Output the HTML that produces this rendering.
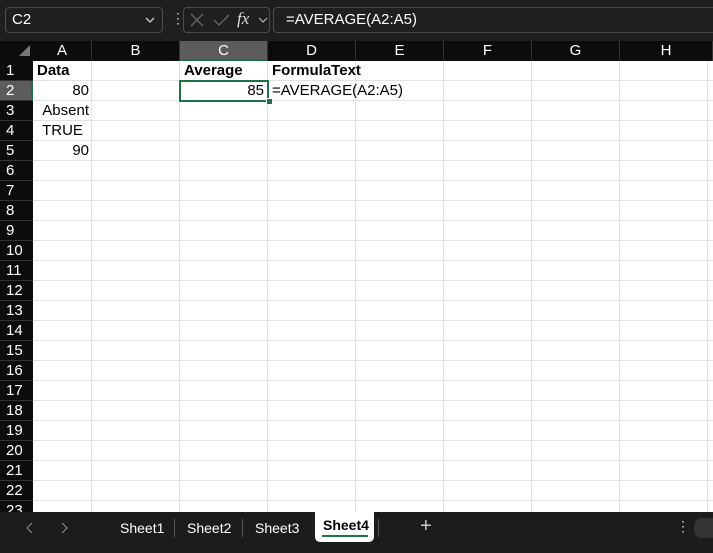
<!DOCTYPE html><html><head><style>
body{margin:0;width:713px;height:553px;overflow:hidden;background:#fff;font-family:"Liberation Sans",sans-serif;position:relative}
.a{position:absolute}
.fb{left:0;top:0;width:713px;height:41px;background:#1f1f1f}
.box{border:1px solid #4a4a4a;border-radius:4px;height:24px;top:7px}
.ch{top:41px;height:20px;background:#0c0c0c;color:#fff;font-size:15px;text-align:center;line-height:20px;border-right:1px solid #333;box-sizing:border-box}
.rh{left:0;width:33px;height:20px;background:#0c0c0c;color:#fff;font-size:15px;line-height:20px;text-align:left;padding-left:6px;box-sizing:border-box;border-bottom:1px solid #333}
.c{font-size:15px;color:#000;line-height:20px;height:20px}
</style></head><body>
<div class="a fb"></div>
<div class="a box" style="left:5px;width:156px"></div>
<div class="a" style="left:12px;top:11px;color:#fff;font-size:15px">C2</div>
<svg class="a" style="left:145px;top:16px" width="10" height="8"><path d="M1 2l4 4 4-4" stroke="#ccc" stroke-width="1.3" fill="none"/></svg>
<div class="a" style="left:171px;top:10px;color:#ccc;font-size:14px">⋮</div>
<div class="a box" style="left:183px;width:85px"></div>
<svg class="a" style="left:188px;top:12px" width="80" height="16"><path d="M3 2L15 14M15 2L3 14" stroke="#666" stroke-width="1.3"/><path d="M26 8L31 13L41 3" stroke="#666" stroke-width="1.3" fill="none"/><path d="M71 6l4 4 4-4" stroke="#bbb" stroke-width="1.2" fill="none"/></svg>
<div class="a" style="left:237px;top:9px;color:#ddd;font-size:17px;font-style:italic;font-family:'Liberation Serif',serif">fx</div>
<div class="a box" style="left:273px;width:450px"></div>
<div class="a" style="left:286px;top:11px;color:#fff;font-size:15px">=AVERAGE(A2:A5)</div>
<div class="a" style="left:0;top:41px;width:713px;height:20px;background:#0c0c0c"></div>
<svg class="a" style="left:19px;top:45px" width="12" height="12"><path d="M11 0V11H0Z" fill="#777"/></svg>
<div class="a ch" style="left:33px;width:59px">A</div>
<div class="a ch" style="left:92px;width:88px">B</div>
<div class="a ch" style="left:180px;width:88px;background:#5c5c5c;border-bottom:2px solid #1e7145">C</div>
<div class="a ch" style="left:268px;width:88px">D</div>
<div class="a ch" style="left:356px;width:88px">E</div>
<div class="a ch" style="left:444px;width:88px">F</div>
<div class="a ch" style="left:532px;width:88px">G</div>
<div class="a ch" style="left:620px;width:93px">H</div>
<div class="a" style="left:33px;top:61px;width:680px;height:451px;background-image:linear-gradient(#e1e1e1 1px,transparent 1px);background-size:100% 20px;background-position:0 19px"></div>
<div class="a" style="left:0;top:61px;width:713px;height:451px;background:linear-gradient(90deg,transparent 91px,#e1e1e1 91px,#e1e1e1 92px,transparent 92px,transparent 179px,#e1e1e1 179px,#e1e1e1 180px,transparent 180px,transparent 267px,#e1e1e1 267px,#e1e1e1 268px,transparent 268px,transparent 355px,#e1e1e1 355px,#e1e1e1 356px,transparent 356px,transparent 443px,#e1e1e1 443px,#e1e1e1 444px,transparent 444px,transparent 531px,#e1e1e1 531px,#e1e1e1 532px,transparent 532px,transparent 619px,#e1e1e1 619px,#e1e1e1 620px,transparent 620px,transparent 707px,#e1e1e1 707px,#e1e1e1 708px,transparent 708px)"></div>
<div id="rows"></div>
<script>
var h='';for(var i=1;i<=23;i++){h+='<div class="a rh" style="top:'+(41+i*20)+'px;'+(i==2?'background:#5c5c5c;border-right:2px solid #1e7145;':'')+'">'+i+'</div>';}
document.getElementById('rows').innerHTML=h;
</script>
<div class="a c" style="left:37px;top:61px;font-weight:bold">Data</div>
<div class="a c" style="left:33px;top:81px;width:56px;text-align:right">80</div>
<div class="a c" style="left:33px;top:101px;width:56px;text-align:right">Absent</div>
<div class="a c" style="left:33px;top:121px;width:59px;text-align:center">TRUE</div>
<div class="a c" style="left:33px;top:141px;width:56px;text-align:right">90</div>
<div class="a c" style="left:184px;top:61px;font-weight:bold">Average</div>
<div class="a c" style="left:272px;top:61px;font-weight:bold">FormulaText</div>
<div class="a c" style="left:180px;top:81px;width:84px;text-align:right">85</div>
<div class="a c" style="left:272px;top:81px">=AVERAGE(A2:A5)</div>
<div class="a" style="left:179px;top:80px;width:86px;height:18px;border:2px solid #1e7145"></div>
<div class="a" style="left:266px;top:98px;width:5px;height:5px;background:#1e7145;border:1px solid #fff"></div>
<div class="a" style="left:0;top:512px;width:713px;height:33px;background:#1c1c1c"></div>
<svg class="a" style="left:22px;top:521px" width="50" height="14"><path d="M10 2L5 7l5 5M40 2l5 5-5 5" stroke="#888" stroke-width="1.2" fill="none"/></svg>
<div class="a" style="left:120px;top:520px;color:#fff;font-size:14px">Sheet1</div>
<div class="a" style="left:174px;top:519px;width:1px;height:18px;background:#555"></div>
<div class="a" style="left:187px;top:520px;color:#fff;font-size:14px">Sheet2</div>
<div class="a" style="left:242px;top:519px;width:1px;height:18px;background:#555"></div>
<div class="a" style="left:255px;top:520px;color:#fff;font-size:14px">Sheet3</div>
<div class="a" style="left:315px;top:512px;width:59px;height:30px;background:#fff;border-radius:0 0 5px 5px"></div>
<div class="a" style="left:323px;top:517px;color:#000;font-size:14px;font-weight:bold">Sheet4</div>
<div class="a" style="left:322px;top:535px;width:46px;height:2px;background:#1e7145"></div>
<div class="a" style="left:378px;top:519px;width:1px;height:18px;background:#555"></div>
<div class="a" style="left:420px;top:515px;color:#ccc;font-size:20px">+</div>
<div class="a" style="left:676px;top:518px;color:#ccc;font-size:14px">⋮</div>
<div class="a" style="left:694px;top:518px;width:19px;height:20px;background:#333;border-radius:8px 0 0 8px"></div>
<div class="a" style="left:0;top:545px;width:713px;height:8px;background:#1c1c1c"></div>
</body></html>
